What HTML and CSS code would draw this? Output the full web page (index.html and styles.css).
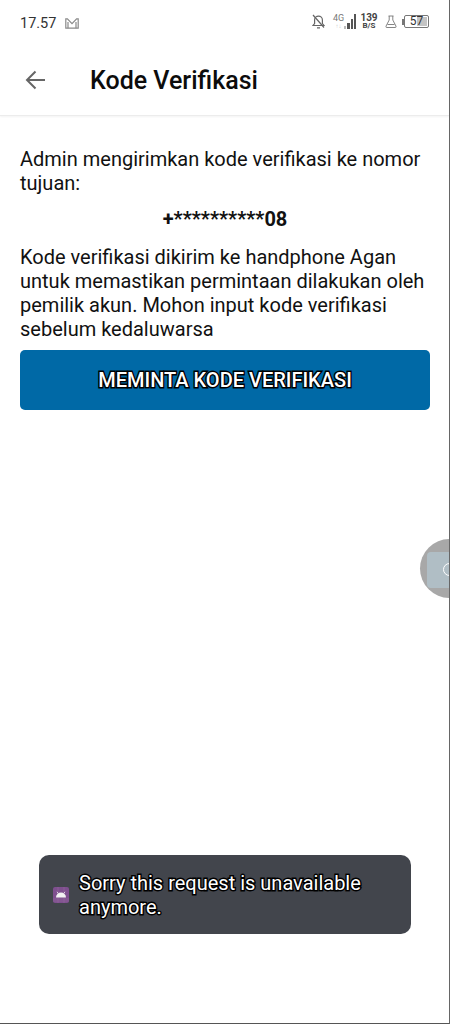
FILE: index.html

```html
<!DOCTYPE html>
<html lang="id">
<head>
  <meta charset="UTF-8">
  <meta name="viewport" content="width=device-width, initial-scale=1.0">
  <title>Kode Verifikasi</title>
  <link rel="stylesheet" href="styles.css">
</head>
<body>
  <div class="screen">
    <div class="status-bar">
      <div class="status-left">
        <span class="clock">17.57</span>
        <svg class="mail-icon" width="14" height="11" viewBox="0 0 14 11" fill="none" stroke="#8a8a8a" stroke-width="1.2">
          <path d="M.8 10.2V.8h1.6L7 5.6 11.6.8h1.6v9.4z"/>
          <path d="M3 10.2V4M11 10.2V4"/>
        </svg>
      </div>
      <div class="status-right">
        <svg class="bell-icon" width="13" height="15" viewBox="0 0 13 15" fill="none" stroke="#666" stroke-width="1.2">
          <path d="M1 11.5h11l-1.6-2V6A3.9 3.9 0 0 0 2.600 6v3.500z"/>
          <path d="M5 13.800h3M1 1l11 12.500"/>
        </svg>
        <div class="network">
          <div class="net-label"><span class="net-4g">4G</span><span class="net-arrows">↑↓</span></div>
          <div class="signal">
            <i class="bar bar-1"></i><i class="bar bar-2"></i><i class="bar bar-3"></i><i class="bar bar-4"></i>
          </div>
        </div>
        <div class="speed"><span>139</span><span>B/S</span></div>
        <svg class="flask-icon" width="12" height="13" viewBox="0 0 12 13" fill="none" stroke="#777" stroke-width=".9">
          <path d="M3.500 1h5M4.200 1v4L1 11.200q-.4 1.300.8 1.300h8.400q1.200 0 .8-1.300L7.800 5V1"/>
          <path d="M2.500 9.500h7"/>
        </svg>
        <div class="battery">
          <span class="battery-tip"></span>
          <div class="battery-body"><span class="battery-level"></span><span class="battery-text">57</span></div>
        </div>
      </div>
    </div>

    <header class="app-bar">
      <svg class="back-icon" width="20" height="20" viewBox="0 0 20 20" fill="none" stroke="#666" stroke-width="2">
        <path d="M20 10H2M10.500 1.500 2 10l8.500 8.500"/>
      </svg>
      <h1>Kode Verifikasi</h1>
    </header>

    <main class="content">
      <p class="text">Admin mengirimkan kode verifikasi ke nomor tujuan:</p>
      <p class="phone">+**********08</p>
      <p class="text">Kode verifikasi dikirim ke handphone Agan untuk memastikan permintaan dilakukan oleh pemilik akun. Mohon input kode verifikasi sebelum kedaluwarsa</p>
      <button class="request-button">MEMINTA KODE VERIFIKASI</button>
    </main>

    <div class="float-ball"><span class="float-inner"><span class="float-ring"></span></span></div>

    <div class="toast">
      <svg class="toast-icon" width="16" height="16" viewBox="0 0 16 16">
        <rect width="16" height="16" rx="2" fill="#7e4f8e"/>
        <path d="M0 12h16M0 14h16M5 0v16M11 0v16" stroke="#94699f" stroke-width=".6"/>
        <path d="M3 10.500a5 5 0 0 1 10 0z" fill="#f2f2f2"/>
        <path d="M5.200 6.500 4 4.800M10.800 6.500 12 4.800" stroke="#f2f2f2" stroke-width=".8"/>
      </svg>
      <span class="toast-text">Sorry this request is unavailable anymore.</span>
    </div>
  </div>
</body>
</html>
```

FILE: styles.css

```css
* {
  box-sizing: border-box;
}
html, body {
  margin: 0;
  padding: 0;
}
body {
  width: 450px;
  height: 1024px;
  overflow: hidden;
  background: #ffffff;
  color: #111111;
  font-family: Roboto, sans-serif;
}
.screen {
  position: relative;
  width: 450px;
  height: 1024px;
  display: flex;
  flex-direction: column;
  border-right: 1px solid #666666;
  border-bottom: 1px solid #555555;
  overflow: hidden;
}

/* status bar */
.status-bar {
  height: 46px;
  padding: 0 20px;
  display: flex;
  align-items: center;
  justify-content: space-between;
}
.status-left {
  display: flex;
  align-items: center;
  gap: 9px;
}
.clock {
  font-size: 14.5px;
  color: #333333;
}
.status-right {
  display: flex;
  align-items: center;
  margin-bottom: 3px;
}
.network {
  display: flex;
  align-items: flex-end;
  width: 23px;
  margin-left: 8px;
}
.net-label {
  display: flex;
  flex-direction: column;
  align-items: center;
  width: 11px;
  line-height: 7px;
}
.net-4g {
  font-size: 9px;
  color: #777777;
}
.net-arrows {
  font-size: 6px;
  color: #cccccc;
}
.signal {
  display: flex;
  align-items: flex-end;
  gap: 1px;
}
.bar {
  display: block;
  width: 2.250px;
  background: #555555;
}
.bar-1 { height: 3px; background: #bbbbbb; }
.bar-2 { height: 6px; }
.bar-3 { height: 10px; }
.bar-4 { height: 15px; }
.speed {
  display: flex;
  flex-direction: column;
  align-items: center;
  width: 14px;
  margin-left: 6px;
  font-size: 10px;
  font-weight: 700;
  line-height: 8px;
  color: #444444;
}
.speed span:last-child {
  font-size: 8px;
}
.flask-icon {
  margin-left: 9px;
}
.battery {
  display: flex;
  align-items: center;
  margin-left: 5px;
}
.battery-tip {
  width: 2px;
  height: 6px;
  background: #777777;
}
.battery-body {
  position: relative;
  width: 25px;
  height: 13px;
  border: 1px solid #777777;
  border-radius: 2px;
  text-align: center;
}
.battery-level {
  position: absolute;
  top: 1px;
  right: 1px;
  bottom: 1px;
  width: 10px;
  background: #c4c4c4;
}
.battery-text {
  position: relative;
  display: block;
  font-size: 12px;
  line-height: 11px;
  color: #333333;
}

/* app bar */
.app-bar {
  height: 70px;
  display: flex;
  align-items: center;
  padding-left: 25px;
  border-bottom: 1px solid #ececec;
  box-shadow: 0 1px 2px rgba(0, 0, 0, 0.05);
}
.back-icon {
  flex: none;
  margin-bottom: 2px;
}
.app-bar h1 {
  margin: 0 0 0 45px;
  font-size: 25px;
  font-weight: 500;
  color: #0c0c0c;
}

/* content */
.content {
  padding: 31px 19px 0 20px;
}
.text {
  margin: 0;
  font-size: 20px;
  line-height: 24px;
}
.phone {
  margin: 12px 0 14px;
  font-size: 20px;
  line-height: 24px;
  font-weight: 700;
  text-align: center;
}
.request-button {
  display: block;
  width: 100%;
  height: 60px;
  margin-top: 9px;
  border: none;
  border-radius: 5px;
  background: #0069a6;
  color: #ffffff;
  font-family: Roboto, sans-serif;
  font-size: 20px;
  font-weight: 500;
  -webkit-text-stroke: 2.800px #000000;
  paint-order: stroke fill;
}

/* floating ball at the edge */
.float-ball {
  position: absolute;
  top: 539px;
  left: 420px;
  width: 59px;
  height: 59px;
  border-radius: 50%;
  background: #a8a8a8;
  padding: 13px 0 0 7px;
}
.float-inner {
  display: block;
  width: 40px;
  height: 36px;
  border-radius: 4px;
  background: #b0bec5;
  padding: 11px 0 0 16px;
}
.float-ring {
  display: block;
  width: 13px;
  height: 13px;
  border: 1.500px solid #ffffff;
  border-radius: 50%;
}

/* toast */
.toast {
  position: absolute;
  top: 855px;
  left: 39px;
  width: 372px;
  height: 79px;
  display: flex;
  align-items: center;
  gap: 10px;
  padding: 0 20px 0 14px;
  border-radius: 10px;
  background: #42454c;
}
.toast-icon {
  flex: none;
}
.toast-text {
  font-size: 20px;
  line-height: 24px;
  color: #ffffff;
  -webkit-text-stroke: 2.800px #000000;
  paint-order: stroke fill;
}
```
